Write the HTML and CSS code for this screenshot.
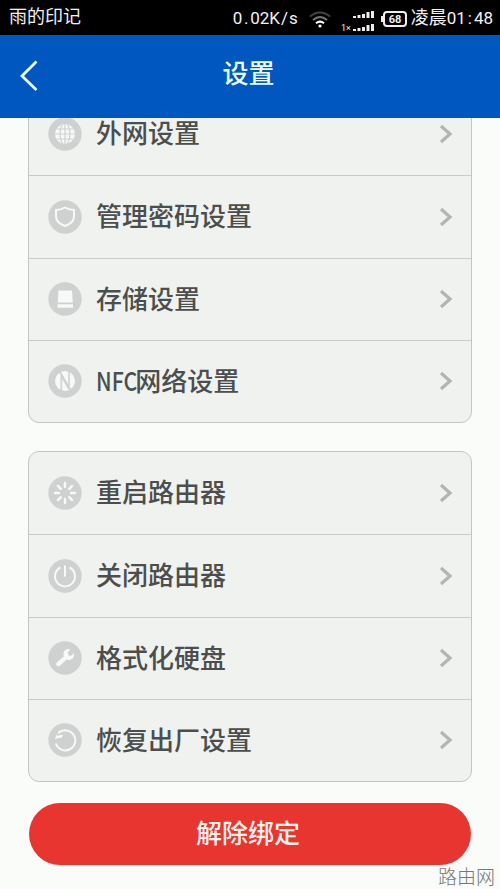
FILE: index.html
```html
<!DOCTYPE html>
<html lang="zh-CN">
<head>
<meta charset="utf-8">
<title>设置</title>
<link rel="stylesheet" href="styles.css">
</head>
<body>
<div class="status">
  <span class="carrier">雨的印记</span>
  <span class="speed">0<span class="punct">.</span>02K<span class="slash">/</span>s</span>
  <svg class="wifi" width="22" height="17" viewBox="0 0 22 17" fill="none" stroke-width="2"><path d="M1 5.5Q11-2.5 21 5.5" stroke="#444"/><path d="M4 9Q11 3 18 9" stroke="#777"/><path d="M7 12.3Q11 9 15 12.3" stroke="#fff"/><circle cx="11" cy="15" r="1.6" fill="#fff"/></svg>
  <svg class="signal" width="36" height="23" viewBox="0 0 36 23" fill="#eee"><path d="M13 7h3v2h-3zM17.500 6h3v3h-3zM22 5h3v4h-3zM26.500 3h3v6h-3zM31 2h3v7h-3zM13 20h3v2h-3zM17.500 19h3v3h-3zM22 18h3v4h-3zM26.500 16h3v6h-3zM31 15h3v7h-3z"/><text x="1" y="22" class="onex">1×</text></svg>
  <svg class="battery" width="26" height="16" viewBox="0 0 26 16"><rect x="3" y="1" width="22" height="14" rx="3" fill="none" stroke="#eee" stroke-width="2"/><path d="M0 5h3v6H0z" fill="#eee"/><text x="14" y="12" text-anchor="middle" class="level">68</text></svg>
  <span class="clock">凌晨<span class="time">01<span class="punct">:</span>48</span></span>
</div>
<header class="header">
  <svg class="back" width="18" height="32" viewBox="0 0 18 32" fill="none" stroke="#eaffff" stroke-width="2.800"><path d="M16.500 2.500 2 17 16.500 31"/></svg>
  <h1>设置</h1>
</header>
<main class="view">
  <ul class="card first">
    <li class="row"><svg class="icon" viewBox="0 0 34 34"><circle class="disc" cx="17" cy="17" r="16.700"/><circle class="fill" cx="17" cy="17" r="10"/><path class="cut" d="M7 17h20M8.500 12h17M8.500 22h17M17 7v20M14.500 7q-5 10 0 20M19.500 7q5 10 0 20"/></svg><span class="label">外网设置</span><svg class="chev" viewBox="0 0 14 20"><path d="M2 2l9 8-9 8"/></svg></li>
    <li class="row"><svg class="icon" viewBox="0 0 34 34"><circle class="disc" cx="17" cy="17" r="16.700"/><path class="line" d="M17 7.500q4.500 2.500 9 2.500v6q0 7-9 10-9-3-9-10v-6q4.500 0 9-2.500z"/></svg><span class="label">管理密码设置</span><svg class="chev" viewBox="0 0 14 20"><path d="M2 2l9 8-9 8"/></svg></li>
    <li class="row"><svg class="icon" viewBox="0 0 34 34"><circle class="disc" cx="17" cy="17" r="16.700"/><path class="fill" d="M10.500 8.500h13.500l.8 12H9.700zM9.500 22.300h15.500v3.400H9.500z"/></svg><span class="label">存储设置</span><svg class="chev" viewBox="0 0 14 20"><path d="M2 2l9 8-9 8"/></svg></li>
    <li class="row"><svg class="icon" viewBox="0 0 34 34"><circle class="disc" cx="17" cy="17" r="16.700"/><circle class="fill" cx="17" cy="17" r="10"/><path class="cut nfc" d="M13.300 27V10L21 23.500M13.300 10 10.500 7.500M21 7v16.500L24 27M14 13l7 12"/></svg><span class="label"><span class="latin">NFC</span>网络设置</span><svg class="chev" viewBox="0 0 14 20"><path d="M2 2l9 8-9 8"/></svg></li>
  </ul>
  <ul class="card">
    <li class="row"><svg class="icon" viewBox="0 0 34 34"><circle class="disc" cx="17" cy="17" r="16.700"/><path class="line ray" d="M17 7v4M17 23v4M7 17h4M23 17h4M9.900 9.900l2.900 2.900M21.200 21.200l2.900 2.900M9.900 24.100l2.900-2.900M21.200 12.800l2.900-2.900"/></svg><span class="label">重启路由器</span><svg class="chev" viewBox="0 0 14 20"><path d="M2 2l9 8-9 8"/></svg></li>
    <li class="row"><svg class="icon" viewBox="0 0 34 34"><circle class="disc" cx="17" cy="17" r="16.700"/><path class="line" d="M12.500 8.500A10 10 0 1 0 21.500 8.500M17 6.500v11"/></svg><span class="label">关闭路由器</span><svg class="chev" viewBox="0 0 14 20"><path d="M2 2l9 8-9 8"/></svg></li>
    <li class="row"><svg class="icon" viewBox="0 0 34 34"><circle class="disc" cx="17" cy="17" r="16.700"/><path class="fill" d="M22.500 8.200 19.800 11.500 20.500 14.500 23.200 14.800 26 12Q26.500 17 23 18.500 21 19.300 18.500 18.500L12 24.700Q9.500 26 8.200 24 7.500 22 9.500 20.700L15.800 15.500Q14.500 10.500 18 8.500 20 7.500 22.500 8.200Z"/></svg><span class="label">格式化硬盘</span><svg class="chev" viewBox="0 0 14 20"><path d="M2 2l9 8-9 8"/></svg></li>
    <li class="row"><svg class="icon" viewBox="0 0 34 34"><circle class="disc" cx="17" cy="17" r="16.700"/><path class="line" d="M7.800 20.500A10 10 0 1 0 10.200 10.300"/><path class="fill" d="M9 10.500 8.800 12.800 15 11.800 14 14.500 6.800 16Z"/></svg><span class="label">恢复出厂设置</span><svg class="chev" viewBox="0 0 14 20"><path d="M2 2l9 8-9 8"/></svg></li>
  </ul>
  <button class="unbind" type="button">解除绑定</button>
  <span class="mark">路由网</span>
</main>
</body>
</html>
```
FILE: styles.css
```css
* { box-sizing: border-box; }
body {
  margin: 0;
  height: 889px;
  overflow: hidden;
  display: flex;
  flex-direction: column;
  background: #f9fcf9;
  font-family: "Noto Sans CJK SC", sans-serif;
}
.status {
  height: 35px;
  flex: none;
  display: flex;
  align-items: center;
  padding: 0 7px 0 9px;
  background: #000;
  color: #f2f2f2;
  font-size: 18px;
  line-height: 34px;
  white-space: nowrap;
}
.carrier { margin-top: -5px; }
.speed { margin-left: auto; font: 17px/34px Roboto, sans-serif; }
.punct { display: inline-block; width: 8px; text-align: center; }
.slash { display: inline-block; width: 9px; text-align: center; }
.wifi { margin: 4px 0 0 11px; }
.signal { margin: 5px 0 0 9px; }
.onex { font: 9px Roboto, sans-serif; }
.battery { margin: 3px 0 0 5px; }
.level { font: bold 11px Roboto, sans-serif; fill: #eee; }
.clock { margin: -2px 0 0 4px; }
.time { font-family: Roboto, sans-serif; font-size: 17px; }
.header {
  height: 83px;
  flex: none;
  display: grid;
  grid-template-columns: 40px 1fr 40px;
  align-items: center;
  background: #0057bf;
  color: #eaffff;
}
.back { margin: -3px 0 0 20px; }
.header h1 {
  margin: 0 3px 9px 0;
  text-align: center;
  font-size: 26px;
  line-height: 36px;
  font-weight: 500;
}
.view {
  flex: 1;
  min-height: 0;
  overflow: hidden;
  display: flex;
  flex-direction: column;
  padding: 0 28px;
}
.card {
  flex: none;
  list-style: none;
  margin: 28px 0 0;
  padding: 0;
  height: 331px;
  display: grid;
  grid-template-rows: repeat(4, 1fr);
  border: 1px solid #c3c6c4;
  border-radius: 11px;
  background: #f0f2f0;
}
.card.first { margin-top: -26px; }
.row {
  display: flex;
  align-items: center;
  padding: 0 18px 0 19px;
  border-top: 1px solid #c8cbc9;
}
.row:first-child { border-top: 0; }
.icon { width: 34px; height: 34px; flex: none; }
.disc { fill: #cfd1d0; }
.fill { fill: #f7f9f8; }
.line { fill: none; stroke: #f7f9f8; stroke-width: 2; }
.ray { stroke-width: 2.4; stroke-linecap: round; }
.cut { fill: none; stroke: #cfd1d0; stroke-width: 1.2; }
.nfc { stroke-width: 1.6; }
.label {
  flex: 1;
  margin: -3px 0 0 14px;
  font-size: 26px;
  line-height: 36px;
  font-weight: 500;
  color: #4b4e4c;
  white-space: nowrap;
}
.row:first-child .label { margin-top: -5px; }
.latin {
  display: inline-block;
  transform: scaleX(.82);
  transform-origin: left;
  margin-right: -11px;
}
.chev {
  width: 14px;
  height: 20px;
  fill: none;
  stroke: #b3b5b4;
  stroke-width: 3.2;
}
.unbind {
  flex: none;
  height: 62px;
  margin: 21px 1px 0;
  padding: 0 4px 4px 0;
  border: 0;
  border-radius: 31px;
  background: #e83530;
  color: #fff4ef;
  font: 500 26px/36px "Noto Sans CJK SC", sans-serif;
}
.mark {
  align-self: flex-end;
  margin: -1px -23px 0 0;
  font-size: 19px;
  line-height: 24px;
  font-weight: 300;
  color: #777;
}
```
